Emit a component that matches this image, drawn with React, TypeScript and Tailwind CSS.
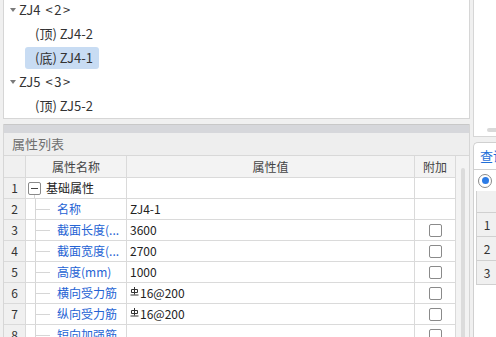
import React from "react";

type Row = {
  n: number;
  name: string;
  value?: string;
  rebar?: boolean;
  check?: boolean;
  group?: boolean;
};

const rows: Row[] = [
  { n: 1, name: "基础属性", group: true },
  { n: 2, name: "名称", value: "ZJ4-1" },
  { n: 3, name: "截面长度(...", value: "3600", check: true },
  { n: 4, name: "截面宽度(...", value: "2700", check: true },
  { n: 5, name: "高度(mm)", value: "1000", check: true },
  { n: 6, name: "横向受力筋", value: "16@200", rebar: true, check: true },
  { n: 7, name: "纵向受力筋", value: "16@200", rebar: true, check: true },
  { n: 8, name: "短向加强筋", check: true },
];

function Caret() {
  return (
    <svg width="6" height="4" viewBox="0 0 6 4" className="shrink-0">
      <path d="M0 0H6L3 4Z" fill="#7a7a7a" />
    </svg>
  );
}

function RebarMark() {
  return (
    <svg width="9" height="9" viewBox="0 0 9 9" className="shrink-0 mr-[1px] -translate-y-[2px]">
      <path d="M4.5 0V7.5M1.5 2.5H7.5V5.5H1.5ZM0.5 8H8.5" stroke="#333" strokeWidth="1" fill="none" />
    </svg>
  );
}

function TreeItem({ label, selected }: { label: string; selected?: boolean }) {
  return (
    <div className="h-[24px] flex items-center">
      <div
        className={`ml-[21px] h-[22px] pl-[10px] pr-[6px] flex items-center rounded-[3px] whitespace-nowrap ${
          selected ? "bg-[#c8dcf3]" : ""
        }`}
      >
        {label}
      </div>
    </div>
  );
}

function TreeGroup({ name, count }: { name: string; count: string }) {
  return (
    <div className="h-[24px] flex items-center pl-[6px] whitespace-nowrap">
      <Caret />
      <span className="ml-[3px]">{name}</span>
      <span className="ml-[5px] tracking-[1.5px]">{count}</span>
    </div>
  );
}

function PropRow({ row }: { row: Row }) {
  return (
    <div className="h-[21px] shrink-0 flex border-b border-[#dadada]">
      <div className="w-[22px] border-r border-[#dadada] bg-[#f0f0f0] flex items-center justify-center text-[#333]">
        {row.n}
      </div>
      <div className="w-[101px] border-r border-[#dadada] flex items-stretch">
        {row.group ? (
          <div className="flex items-stretch pl-[2px]">
            <div className="w-[13px] flex flex-col items-center pt-[4px]">
              <div className="w-[13px] h-[13px] shrink-0 border border-[#8a8a8a] rounded-[2px] flex items-center justify-center">
                <div className="w-[7px] h-px bg-[#444]" />
              </div>
              <div className="flex-1 w-px bg-[#d6d6d6]" />
            </div>
            <span className="ml-[5px] flex items-center text-[#222]">{row.name}</span>
          </div>
        ) : (
          <div className="flex items-stretch pl-[9px]">
            <div className="w-[15px] border-l border-[#d6d6d6] flex items-center">
              <div className="h-px w-full bg-[#d6d6d6]" />
            </div>
            <span className="ml-[7px] flex items-center whitespace-nowrap text-[#2563d4]">{row.name}</span>
          </div>
        )}
      </div>
      <div className="w-[288px] border-r border-[#dadada] flex items-center pl-[3px] text-[#222]">
        {row.rebar && <RebarMark />}
        {row.value}
      </div>
      <div className="w-[41px] border-r border-[#dadada] flex items-center justify-center">
        {row.check && (
          <div className="w-[13px] h-[13px] border border-[#8a8a8a] rounded-[2px] bg-white" />
        )}
      </div>
    </div>
  );
}

export default function App() {
  return (
    <div className="w-[496px] h-[337px] overflow-hidden bg-[#f0f0f0] flex font-[family-name:'Noto_Sans_CJK_SC',sans-serif]">
      {/* left column */}
      <div className="w-[470px] shrink-0 pl-[3px] flex flex-col">
        <div className="h-[119px] shrink-0 bg-white border-l border-r border-b border-[#d6d6d6] overflow-hidden text-[13px] text-[#333]">
          <div className="-mt-[2px]">
            <TreeGroup name="ZJ4" count="<2>" />
            <TreeItem label="(顶) ZJ4-2" />
            <TreeItem label="(底) ZJ4-1" selected />
            <TreeGroup name="ZJ5" count="<3>" />
            <TreeItem label="(顶) ZJ5-2" />
          </div>
        </div>

        <div className="mt-[5px] flex-1 min-h-0 flex flex-col border-l border-r border-[#d6d6d6] bg-white overflow-hidden">
          <div className="h-[9px] shrink-0 border-t border-[#c8c8c8] bg-[#d6d7db]" />
          <div className="h-[23px] shrink-0 bg-[#eeeeee] border-b border-[#d8d8d8] flex items-center pl-[8px] text-[13px] text-[#707070]">
            属性列表
          </div>
          <div className="flex-1 flex text-[12px]">
            <div className="w-[452px] flex flex-col">
              <div className="h-[22px] shrink-0 flex border-b border-[#dadada] bg-[#f3f3f3] text-[#444]">
                <div className="w-[22px] border-r border-[#dadada] bg-[#f0f0f0]" />
                <div className="w-[101px] border-r border-[#dadada] flex items-center justify-center">
                  属性名称
                </div>
                <div className="w-[288px] border-r border-[#dadada] flex items-center justify-center">
                  属性值
                </div>
                <div className="w-[41px] border-r border-[#dadada] flex items-center justify-center">
                  附加
                </div>
              </div>
              {rows.map((r) => (
                <PropRow key={r.n} row={r} />
              ))}
            </div>
            <div className="flex-1 bg-[#f3f3f3] pt-[12px] pl-[5px]">
              <div className="w-[4px] h-[200px] rounded-full bg-[#dcdcdc]" />
            </div>
          </div>
        </div>
      </div>

      {/* right column */}
      <div className="flex-1 pl-[3px] flex flex-col">
        <div className="h-[137px] shrink-0 bg-white border-l border-b border-[#d6d6d6] flex flex-col justify-end pb-[4px]">
          <div className="ml-[13px] h-[4px] rounded-full bg-[#d9d9d9]" />
        </div>
        <div className="mt-[5px] h-[27px] shrink-0 bg-white border-t border-l border-[#d0d0d0] rounded-tl-[5px] flex items-center pl-[6px] whitespace-nowrap overflow-hidden text-[13px] text-[#1f6fd8]">
          查询
        </div>
        <div className="flex-1 bg-white border-l border-t border-[#d0d0d0] flex flex-col">
          <div className="h-[21px] shrink-0 flex items-center pl-[4px]">
            <div className="w-[14px] h-[14px] shrink-0 rounded-full border border-[#8a8a8a] flex items-center justify-center">
              <div className="w-[7px] h-[7px] rounded-full bg-[#2b7be6]" />
            </div>
          </div>
          <div className="pl-[2px] flex-1 flex flex-col">
            <div className="h-[22px] shrink-0 bg-[#f0f0f0] border-l border-b border-[#d0d0d0]" />
            {[1, 2, 3].map((n) => (
              <div
                key={n}
                className="h-[24px] shrink-0 w-[22px] bg-[#f0f0f0] border-l border-r border-b border-[#d0d0d0] flex items-center justify-center text-[12px] text-[#333]"
              >
                {n}
              </div>
            ))}
          </div>
        </div>
      </div>
    </div>
  );
}
